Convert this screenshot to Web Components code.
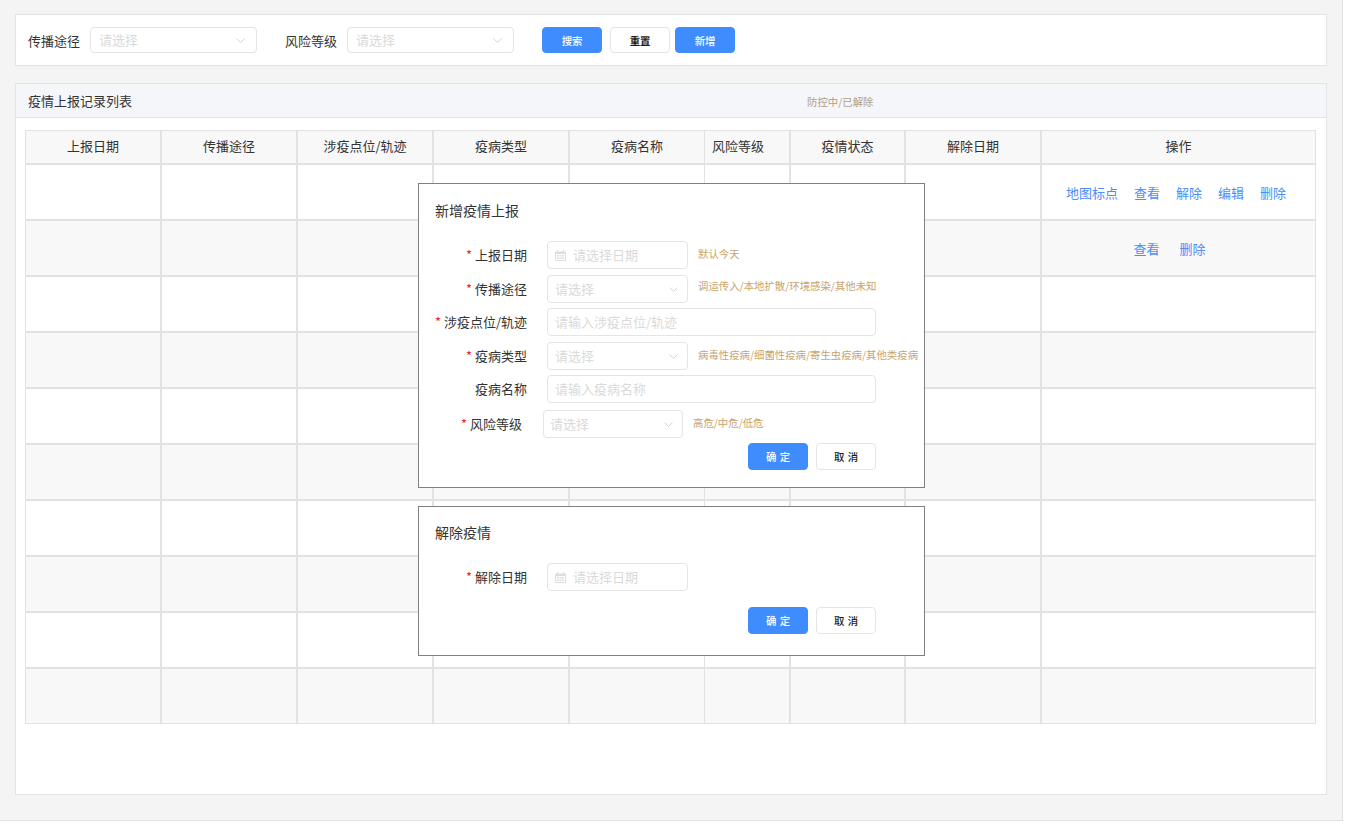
<!DOCTYPE html>
<html lang="zh">
<head>
<meta charset="utf-8">
<title>疫情上报</title>
<style>
    html, body { margin: 0; background: #fff; }
    body { font-family: "Noto Sans CJK SC", "Liberation Sans", sans-serif; font-size: 13px; color: #333; }
</style>
</head>
<body>

<page-frame>
    <search-bar>
        <span class="lbl">传播途径</span>
        <select-box style="width:167px;margin-left:10px">请选择</select-box>
        <span class="lbl" style="margin-left:28px">风险等级</span>
        <select-box style="width:167px;margin-left:10px">请选择</select-box>
        <ui-button primary style="margin-left:28px">搜索</ui-button>
        <ui-button style="margin-left:8px;font-weight:700">重置</ui-button>
        <ui-button primary style="margin-left:5px">新增</ui-button>
    </search-bar>

    <list-card>
        <span slot="title">疫情上报记录列表</span>
        <span slot="note">防控中/已解除</span>
        <data-table></data-table>
    </list-card>

    <dialog-stack>
        <dialog-panel style="height:303px">
            <span slot="title">新增疫情上报</span>
            <form-row required>
                上报日期
                <date-box slot="field">请选择日期</date-box>
                <span slot="hint">默认今天</span>
            </form-row>
            <form-row required hint-up>
                传播途径
                <select-box slot="field">请选择</select-box>
                <span slot="hint">调运传入/本地扩散/环境感染/其他未知</span>
            </form-row>
            <form-row required>
                涉疫点位/轨迹
                <text-box slot="field">请输入涉疫点位/轨迹</text-box>
            </form-row>
            <form-row required>
                疫病类型
                <select-box slot="field">请选择</select-box>
                <span slot="hint">病毒性疫病/细菌性疫病/寄生虫疫病/其他类疫病</span>
            </form-row>
            <form-row>
                疫病名称
                <text-box slot="field">请输入疫病名称</text-box>
            </form-row>
            <form-row required shifted>
                风险等级
                <select-box slot="field">请选择</select-box>
                <span slot="hint">高危/中危/低危</span>
            </form-row>
            <ui-button slot="actions" primary spaced>确 定</ui-button>
            <ui-button slot="actions" spaced>取 消</ui-button>
        </dialog-panel>

        <dialog-panel style="height:148px;--title-height:56px;--title-top:15px;--foot:21px">
            <span slot="title">解除疫情</span>
            <form-row required>
                解除日期
                <date-box slot="field">请选择日期</date-box>
            </form-row>
            <ui-button slot="actions" primary spaced>确 定</ui-button>
            <ui-button slot="actions" spaced>取 消</ui-button>
        </dialog-panel>
    </dialog-stack>
</page-frame>

<script>
class ShadowBase extends HTMLElement{
    constructor(){
        super();

        // Make a template from the markup function
        let template = document.createElement('template');
        template.innerHTML = this.markup();

        this.attachShadow({mode: 'open'}).append(template.content.cloneNode(true));
    }
}

class PageFrame extends ShadowBase{
    markup(){
        return `
            <style>
                :host {
                    display: block;
                    position: relative;
                    box-sizing: border-box;
                    width: 1343px;
                    height: 821px;
                    padding: 14px 15px 25px;
                    background: #f4f4f4;
                    border-right: 1px solid #e2e2e2;
                    border-bottom: 1px solid #e2e2e2;
                }
            </style>
            <slot></slot>
        `
    }
}

class SearchBar extends ShadowBase{
    markup(){
        return `
            <style>
                :host {
                    display: flex;
                    align-items: center;
                    box-sizing: border-box;
                    height: 52px;
                    padding: 0 12px;
                    background: #fff;
                    border: 1px solid #e4e4e4;
                }
            </style>
            <slot></slot>
        `
    }
}

class SelectBox extends ShadowBase{
    markup(){
        return `
            <style>
                :host {
                    display: flex;
                    align-items: center;
                    justify-content: space-between;
                    box-sizing: border-box;
                    height: 26px;
                    padding: 0 var(--chevron-gap, 11px) 0 var(--pad, 8px);
                    background: #fff;
                    border: 1px solid #e4e4e4;
                    border-radius: 4px;
                    color: #dadada;
                    font-size: 13px;
                }
                span { margin-bottom: 2px; }
                svg { width: 9px; height: 5px; }
            </style>
            <span><slot></slot></span>
            <svg viewBox="0 0 9 5" fill="none" stroke="#d4d4d4" stroke-width="1"><path d="M.5.500 4.500 4.500 8.500.500"/></svg>
        `
    }
}

class TextBox extends ShadowBase{
    markup(){
        return `
            <style>
                :host {
                    display: flex;
                    align-items: center;
                    box-sizing: border-box;
                    height: 100%;
                    padding: 0 7px;
                    background: #fff;
                    border: 1px solid #e4e4e4;
                    border-radius: 4px;
                    color: #dadada;
                    font-size: 13px;
                }
                span { margin-bottom: 2px; }
            </style>
            <span><slot></slot></span>
        `
    }
}

class DateBox extends ShadowBase{
    markup(){
        return `
            <style>
                :host {
                    display: flex;
                    align-items: center;
                    gap: 7px;
                    box-sizing: border-box;
                    height: 100%;
                    padding: 0 7px;
                    background: #fff;
                    border: 1px solid #e4e4e4;
                    border-radius: 4px;
                    color: #dadada;
                    font-size: 13px;
                }
                span { margin-bottom: 2px; }
                svg { width: 11px; height: 11px; flex: none; }
            </style>
            <svg viewBox="0 0 11 11" fill="#dedede">
                <path d="M2 0h1v1.500H2zM8 0h1v1.500H8zM0 1.500h11V11H0zM1 4v6h9V4z"/>
                <path d="M2 5h2v1.500H2zM4.500 5h2v1.500h-2zM7 5h2v1.500H7zM2 7.500h2V9H2zM4.500 7.500h2V9h-2zM7 7.500h2V9H7z"/>
            </svg>
            <span><slot></slot></span>
        `
    }
}

class UiButton extends ShadowBase{
    markup(){
        return `
            <style>
                :host {
                    display: inline-flex;
                    align-items: center;
                    justify-content: center;
                    box-sizing: border-box;
                    flex: none;
                    width: 60px;
                    height: 26px;
                    background: #fff;
                    border: 1px solid #e4e4e4;
                    border-radius: 4px;
                    color: #1c1c1c;
                    font-size: 10.400px;
                    font-weight: 500;
                }
                :host([primary]) {
                    background: #3f8cff;
                    border-color: #3f8cff;
                    color: #fff;
                }
                :host([spaced]) { height: 27px; word-spacing: 1px; }
            </style>
            <slot></slot>
        `
    }
}

class ListCard extends ShadowBase{
    markup(){
        return `
            <style>
                :host {
                    display: block;
                    box-sizing: border-box;
                    height: 712px;
                    margin-top: 17px;
                    background: #fff;
                    border: 1px solid #e4e4e4;
                }
                header {
                    display: flex;
                    align-items: center;
                    box-sizing: border-box;
                    height: 34px;
                    padding: 0 12px;
                    background: #f5f6fa;
                    border-bottom: 1px solid #e4e4e4;
                    color: #333;
                }
                .note {
                    margin: 2px 0 0 675px;
                    color: #b09f86;
                    font-size: 10.400px;
                }
                .body { padding: 12px 10px 0 9px; }
            </style>
            <header>
                <slot name="title"></slot>
                <span class="note"><slot name="note"></slot></span>
            </header>
            <div class="body"><slot></slot></div>
        `
    }
}

class DataTable extends ShadowBase{
    markup(){
        let heads = ['上报日期', '传播途径', '涉疫点位/轨迹', '疫病类型', '疫病名称', '风险等级', '疫情状态', '解除日期', '操作'];
        let ops = {
            0: ['地图标点', '查看', '解除', '编辑', '删除'],
            1: ['查看', '删除']
        };

        let cells = heads.map((h, c) => `<div class="cell head c${c}"><span>${h}</span></div>`).join('');
        for(let r = 0; r < 10; r++){
            for(let c = 0; c < heads.length; c++){
                let inner = '';
                if(c === 8 && ops[r]){
                    inner = `<div class="ops r${r}">` + ops[r].map(o => `<a>${o}</a>`).join('') + `</div>`;
                }
                cells += `<div class="cell c${c} ${r % 2 ? 'alt' : ''}">${inner}</div>`;
            }
        }

        return `
            <style>
                :host {
                    display: grid;
                    grid-template-columns: 136px 136px 136px 136px 135px 86px 115px 136px 275px;
                    grid-template-rows: 34px repeat(10, 56px);
                    width: 1291px;
                }
                .cell {
                    display: flex;
                    align-items: center;
                    justify-content: center;
                    box-sizing: border-box;
                    background: #fff;
                    border: 1px solid #e2e2e2;
                    font-size: 13px;
                    color: #333;
                }
                /* this column line is a single pixel in the design */
                .c4 { border-right: 0; }
                .head, .alt { background: #f8f8f8; }
                .head span { margin-bottom: 4px; }
                .head.c5 span { margin-right: 18px; }
                .ops { display: flex; color: #4a8dfb; }
                .ops.r0 { gap: 16px; margin-left: -5px; }
                .ops.r1 { gap: 20px; margin-left: -18px; }
            </style>
            ${cells}
        `
    }
}

class DialogStack extends ShadowBase{
    markup(){
        return `
            <style>
                /* floats over the table */
                :host {
                    position: absolute;
                    left: 418px;
                    top: 183px;
                    display: flex;
                    flex-direction: column;
                    gap: 18px;
                    width: 507px;
                }
            </style>
            <slot></slot>
        `
    }
}

class DialogPanel extends ShadowBase{
    markup(){
        return `
            <style>
                :host {
                    display: flex;
                    flex-direction: column;
                    box-sizing: content-box;
                    background: #fff;
                    border: 1px solid #808080;
                }
                .title {
                    height: var(--title-height, 57px);
                    padding: var(--title-top, 16px) 0 0 16px;
                    box-sizing: border-box;
                    font-size: 14px;
                    line-height: 21px;
                    color: #333;
                }
                .rows { display: flex; flex-direction: column; gap: 5px; }
                ::slotted(form-row:nth-of-type(even)) { margin-top: 1px; }
                .actions {
                    display: flex;
                    justify-content: flex-end;
                    gap: 8px;
                    margin-top: auto;
                    padding: 0 48px var(--foot, 17px) 0;
                }
            </style>
            <div class="title"><slot name="title"></slot></div>
            <div class="rows"><slot></slot></div>
            <div class="actions"><slot name="actions"></slot></div>
        `
    }
}

class FormRow extends ShadowBase{
    markup(){
        return `
            <style>
                :host {
                    display: flex;
                    align-items: center;
                    height: 28px;
                    color: #333;
                    font-size: 13px;
                    --pad: 7px;
                    --chevron-gap: 9px;
                }
                :host([shifted]) { margin: 2px 0 0 -5px !important; --pad: 6px; }
                .label {
                    width: 108px;
                    margin: 0 20px 1px 0;
                    text-align: right;
                    flex: none;
                }
                :host([shifted]) .label { margin-right: 21px; }
                .star { display: none; color: #f5222d; }
                :host([required]) .star { display: inline; }
                .field { width: 141px; height: 100%; flex: none; }
                :host([shifted]) .field { width: 140px; }
                ::slotted(select-box) { height: 100%; }
                ::slotted(text-box) { width: 329px; }
                .hint {
                    margin: 0 0 3px 10px;
                    color: #c9a46d;
                    font-size: 10.400px;
                    white-space: nowrap;
                }
                :host([hint-up]) .hint { margin-bottom: 8px; }
            </style>
            <div class="label"><span class="star">*</span><slot></slot></div>
            <div class="field"><slot name="field"></slot></div>
            <div class="hint"><slot name="hint"></slot></div>
        `
    }
}

customElements.define('page-frame', PageFrame);
customElements.define('search-bar', SearchBar);
customElements.define('select-box', SelectBox);
customElements.define('text-box', TextBox);
customElements.define('date-box', DateBox);
customElements.define('ui-button', UiButton);
customElements.define('list-card', ListCard);
customElements.define('data-table', DataTable);
customElements.define('dialog-stack', DialogStack);
customElements.define('dialog-panel', DialogPanel);
customElements.define('form-row', FormRow);
</script>
</body>
</html>
